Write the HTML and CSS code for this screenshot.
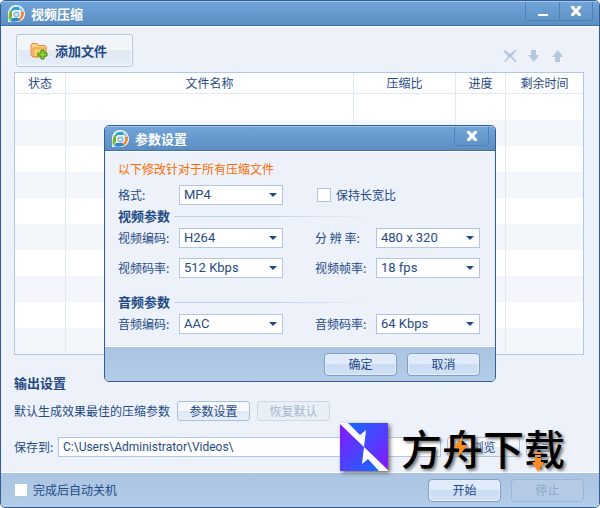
FILE: index.html
```
<!DOCTYPE html>
<html lang="zh-CN">
<head>
    <meta charset="utf-8">
    <title>视频压缩</title>
    <link rel="stylesheet" href="styles.css">
</head>
<body>

<svg class="defs" width="0" height="0" aria-hidden="true">
    <symbol id="logo" viewBox="0 0 18 18">
        <path d="M9 0C4 0 1 4 1 9v8h8c5 0 9-3 9-8s-4-9-9-9z" fill="#f3f6f6"/>
        <path d="M4 5C5 2 8 1 12 2l1 3-6 0-3 2z" fill="#27a5cf"/>
        <path d="M12 2c3 1 5 4 5 6h-3l-1-4z" fill="#9cc8e4"/>
        <path d="M14 7h3c0 4-1 7-5 9l-1-2 3-3z" fill="#f08532"/>
        <path d="M3 16l2-3h6l2 2c-3 2-7 2-10 1z" fill="#2c87c8"/>
        <path d="M3 5c-1 3-2 7-1 11l3-4V7z" fill="#75b52b"/>
        <path d="M6 6h7v7H6z" fill="#e8f1fa"/>
        <circle cx="9.500" cy="9.500" r="3" fill="#8fb9df"/>
        <circle cx="9.500" cy="9.500" r="1.500" fill="#dcebf8"/>
    </symbol>
    <symbol id="close" viewBox="0 0 10 10">
        <path d="M0 0h3l2 3 2-3h3v2L7 5l3 3v2H7L5 7l-2 3H0V8l3-3-3-3z" fill="#fff"/>
    </symbol>
</svg>

<div class="window">
    <header class="titlebar">
        <svg class="logo"><use href="#logo"/></svg>
        <h1>视频压缩</h1>
        <div class="caption">
            <button type="button" aria-label="最小化"><svg viewBox="0 0 10 10"><path d="M0 8h10v2H0z" fill="#fff"/></svg></button>
            <button type="button" aria-label="关闭"><svg><use href="#close"/></svg></button>
        </div>
    </header>

    <main class="content">
        <div class="toolbar">
            <button type="button" class="add">
                <svg viewBox="0 0 18 18">
                    <path d="M1 3l1-1.500h5l1.500 2H15l1 1V14l-1 1H3l-2-2z" fill="#fbd384" stroke="#e0863a"/>
                    <path d="M3 6h13l-1 8.500H3z" fill="#fcc868" stroke="#ea9a45"/>
                    <path d="M11 8h3v3h3v3h-3v3h-3v-3H8v-3h3z" fill="#8fd33b" stroke="#3d8a12"/>
                </svg>
                添加文件
            </button>
            <div class="tools">
                <button type="button" aria-label="删除"><svg viewBox="0 0 14 12"><path d="M0 1l2-1 5 4 5-4h2L9 6l5 6-2 0-5-5-5 5H1l4-6z"/></svg></button>
                <button type="button" aria-label="下移"><svg viewBox="0 0 14 12"><path d="M4 0h5v5h3L7 12 1 5h3z"/></svg></button>
                <button type="button" aria-label="上移"><svg viewBox="0 0 14 12"><path d="M4 12h5V7h3L7 0 1 7h3z"/></svg></button>
            </div>
        </div>

        <table class="files">
            <colgroup><col class="c-state"><col><col class="c-ratio"><col class="c-progress"><col class="c-time"></colgroup>
            <thead>
                <tr><th>状态</th><th>文件名称</th><th>压缩比</th><th>进度</th><th>剩余时间</th></tr>
            </thead>
            <tbody>
                <tr><td></td><td></td><td></td><td></td><td></td></tr>
                <tr><td></td><td></td><td></td><td></td><td></td></tr>
                <tr><td></td><td></td><td></td><td></td><td></td></tr>
                <tr><td></td><td></td><td></td><td></td><td></td></tr>
                <tr><td></td><td></td><td></td><td></td><td></td></tr>
                <tr><td></td><td></td><td></td><td></td><td></td></tr>
                <tr><td></td><td></td><td></td><td></td><td></td></tr>
                <tr><td></td><td></td><td></td><td></td><td></td></tr>
                <tr><td></td><td></td><td></td><td></td><td></td></tr>
                <tr><td></td><td></td><td></td><td></td><td></td></tr>
            </tbody>
        </table>

        <section class="output">
            <h2>输出设置</h2>
            <div class="line">
                <span>默认生成效果最佳的压缩参数</span>
                <button type="button" class="btn">参数设置</button>
                <button type="button" class="btn" disabled>恢复默认</button>
            </div>
            <div class="line save">
                <label for="path">保存到:</label>
                <input type="text" id="path" value="C:\Users\Administrator\Videos\">
                <button type="button" class="btn">浏览</button>
                <button type="button" class="btn open" aria-label="打开文件夹"><svg viewBox="0 0 14 12"><path d="M1.500 10.500v-9h4l1 2h6v7zM3.500 6.500h7"/></svg></button>
            </div>
        </section>
    </main>

    <footer class="actions">
        <label class="check"><input type="checkbox">完成后自动关机</label>
        <button type="button" class="big">开始</button>
        <button type="button" class="big" disabled>停止</button>
    </footer>
</div>

<div class="dialog" role="dialog" aria-labelledby="dialog-title">
    <div class="titlebar">
        <svg class="logo"><use href="#logo"/></svg>
        <h1 id="dialog-title">参数设置</h1>
        <div class="caption">
            <button type="button" aria-label="关闭"><svg><use href="#close"/></svg></button>
        </div>
    </div>
    <form class="params">
        <p class="note">以下修改针对于所有压缩文件</p>
        <div class="row first">
            <div class="field"><label for="format">格式:</label><span class="select"><select id="format"><option>MP4</option></select></span></div>
            <label class="check"><input type="checkbox">保持长宽比</label>
        </div>
        <h2>视频参数</h2>
        <div class="row">
            <div class="field"><label for="vcodec">视频编码:</label><span class="select"><select id="vcodec"><option>H264</option></select></span></div>
            <div class="field"><label for="size">分 辨 率:</label><span class="select"><select id="size"><option>480 x 320</option></select></span></div>
        </div>
        <div class="row">
            <div class="field"><label for="vrate">视频码率:</label><span class="select"><select id="vrate"><option>512 Kbps</option></select></span></div>
            <div class="field"><label for="fps">视频帧率:</label><span class="select"><select id="fps"><option>18 fps</option></select></span></div>
        </div>
        <h2 class="audio">音频参数</h2>
        <div class="row">
            <div class="field"><label for="acodec">音频编码:</label><span class="select"><select id="acodec"><option>AAC</option></select></span></div>
            <div class="field"><label for="arate">音频码率:</label><span class="select"><select id="arate"><option>64 Kbps</option></select></span></div>
        </div>
    </form>
    <div class="actions">
        <button type="button" class="big">确定</button>
        <button type="button" class="big">取消</button>
    </div>
</div>

<div class="brand">
    <svg class="mark" viewBox="0 0 48 48">
        <defs>
            <linearGradient id="right" x1="0" y1="0" x2="1" y2="1"><stop offset="0" stop-color="#0b72ff"/><stop offset="1" stop-color="#8a14ff"/></linearGradient>
            <linearGradient id="left" x1="0" y1="0" x2="1" y2="1"><stop offset="0" stop-color="#8a14ff"/><stop offset="1" stop-color="#0b72ff"/></linearGradient>
        </defs>
        <path d="M0 0h48v48z" fill="url(#right)"/>
        <path d="M0 0v48h48z" fill="url(#left)"/>
        <path d="M0 0h8l12 12 6-5-2 17L0 1z" fill="#fff"/>
        <path d="M24 24l24 23v1h-9L28 36l-6 5z" fill="#fff"/>
    </svg>
    <span class="name">方舟下载</span>
    <svg class="bolt" viewBox="0 0 14 22"><path d="M9 0L0 12h6l-2 10L14 9H8z" fill="#ff8c1e"/></svg>
    <svg class="down" viewBox="0 0 12 20"><path d="M3 0h6v2H3zM3 3h6v2H3zM3 6h6v4h3L6 20 0 10h3z" fill="#ff8c1e"/></svg>
</div>

</body>
</html>
```

FILE: styles.css
```
* {
    box-sizing: border-box;
}
body {
    margin: 0;
    background: #fff;
    color: #1f4a85;
    font: 12px/18px "Noto Sans CJK SC", sans-serif;
}
button, input, select {
    margin: 0;
    color: inherit;
    font: inherit;
}
button {
    padding: 0;
}
h1, h2, p {
    margin: 0;
}
h1, h2 {
    font-size: 13px;
    font-weight: bold;
}
.defs {
    position: absolute;
}

/* window frame */
.window, .dialog {
    display: flex;
    flex-direction: column;
    background: #edf2fa;
    border: 1px solid #335c94;
    border-radius: 5px;
    overflow: hidden;
}
.window {
    min-height: 100vh;
}
.titlebar {
    display: flex;
    align-items: center;
    gap: 6px;
    height: 25px;
    padding: 0 6px;
    color: #fff;
    background: linear-gradient(#71a4d8, #5c8ec2);
    border-top: 1px solid #a0c4ea;
    border-bottom: 1px solid #3d73b0;
}
.logo {
    width: 18px;
    height: 18px;
}
.caption {
    display: flex;
    align-self: flex-start;
    height: 19px;
    margin-left: auto;
    border: 1px solid #5180b8;
    border-top: 0;
    border-radius: 0 0 4px 4px;
}
.caption button {
    display: grid;
    place-items: center;
    width: 33px;
    background: none;
    border: 0;
}
.caption button + button {
    border-left: 1px solid #5180b8;
}
.caption svg {
    width: 10px;
    height: 10px;
}

/* main window */
.content {
    flex: 1;
    padding: 7px 15px 0 13px;
    border-top: 1px solid #fff;
}
.toolbar {
    display: flex;
    align-items: flex-end;
    justify-content: space-between;
    padding: 0 19px 5px 2px;
}
.add {
    display: flex;
    align-items: center;
    gap: 7px;
    width: 117px;
    height: 33px;
    padding: 0 13px;
    font-size: 13px;
    font-weight: bold;
    background: linear-gradient(#f1f4f9 48%, #dfe8f3 50%, #e6eef8);
    border: 1px solid #b3c6df;
    border-radius: 3px;
    box-shadow: inset 0 0 0 1px #f8fafd;
}
.add svg {
    width: 18px;
    height: 18px;
}
.tools {
    display: flex;
    gap: 10px;
    padding-bottom: 5px;
}
.tools button {
    display: block;
    width: 14px;
    height: 12px;
    background: none;
    border: 0;
}
.tools svg {
    display: block;
    fill: #b4c8de;
}

.files {
    width: 100%;
    table-layout: fixed;
    border: 1px solid #aec9e5;
    border-spacing: 0;
    background: #fff;
}
.c-state { width: 51px; }
.c-ratio { width: 102px; }
.c-progress { width: 50px; }
.c-time { width: 77px; }
.files th, .files td {
    padding: 0;
    border-right: 1px solid #e1eaf4;
}
.files th:last-child, .files td:last-child {
    border-right: 0;
}
.files th {
    height: 21px;
    font-weight: normal;
    border-bottom: 1px solid #e1eaf4;
}
.files td {
    height: 26px;
}
.files tbody tr:nth-child(even) {
    background: #f3f7fb;
}

.output h2 {
    padding: 19px 0 9px;
}
.line {
    display: flex;
    align-items: center;
    gap: 7px;
    margin-bottom: 16px;
}
.save {
    gap: 6px;
    margin: 0 24px 15px 0;
}
.save label {
    width: 38px;
    white-space: nowrap;
}
#path, select {
    height: 20px;
    padding: 0 4px;
    font: 13px/18px Roboto, sans-serif;
    background: #fff;
    border: 1px solid #afc7e4;
    border-radius: 0;
    outline: 0;
}
#path {
    flex: 1;
    min-width: 0;
    font-size: 12px;
}
.btn {
    width: 73px;
    height: 20px;
    background: linear-gradient(#f6f8fb 48%, #dfe9f5 50%, #e6eef8);
    border: 1px solid #aabfda;
    border-radius: 3px;
}
.btn:disabled {
    color: #a5b7cf;
    background: #e9eff7;
    border-color: #ced9e8;
}
.btn.open {
    display: grid;
    place-items: center;
    width: 34px;
}
.open svg {
    width: 14px;
    height: 12px;
    fill: none;
    stroke: #5f80ad;
}

.actions {
    display: flex;
    align-items: center;
    justify-content: flex-end;
    gap: 10px;
    height: 35px;
    padding: 0 15px 0 13px;
    background: linear-gradient(#aac4e1, #b3cce8);
    border-top: 1px solid #fff;
}
.big {
    width: 73px;
    height: 23px;
    background: linear-gradient(#dfeafb 48%, #cbdcf3 50%, #d1e0f5);
    border: 1px solid #7f9fc8;
    border-radius: 4px;
    box-shadow: inset 0 0 0 1px #e4eefc;
}
.big:disabled {
    color: #8ba7ca;
    background: #b5cbe5;
    border-color: #9bb6d6;
    box-shadow: none;
}
.check {
    display: flex;
    align-items: center;
    gap: 5px;
}
.check input {
    appearance: none;
    width: 14px;
    height: 14px;
    background: #fff;
    border: 1px solid #afc7e4;
}
.window .check {
    margin-right: auto;
}
.row .check {
    padding-left: 2px;
}

/* settings dialog */
.dialog {
    position: absolute;
    top: 125px;
    left: 50%;
    width: 392px;
    margin-left: -196px;
}
.params {
    padding: 8px 15px 12px 13px;
    border-top: 1px solid #fff;
}
.note {
    padding-bottom: 7px;
    color: #ff6a00;
}
.row {
    display: grid;
    grid-template-columns: 165px 1fr;
    column-gap: 32px;
    margin-bottom: 10px;
}
.row.first {
    margin-bottom: 2px;
}
.row:last-child {
    margin-bottom: 0;
}
.field {
    display: grid;
    grid-template-columns: 61px 104px;
    align-items: center;
}
.params h2 {
    display: flex;
    align-items: center;
    gap: 4px;
    margin-bottom: 3px;
}
.params h2::after {
    content: "";
    width: 200px;
    height: 1px;
    background: linear-gradient(90deg, #bfd3ee 50%, #edf2fa);
}
.params h2.audio {
    margin-top: 15px;
}
.select {
    display: grid;
    align-items: center;
}
.select select, .select::after {
    grid-area: 1 / 1;
}
.select select {
    appearance: none;
    width: 104px;
}
.select::after {
    content: "";
    justify-self: end;
    margin-right: 6px;
    border: 4px solid transparent;
    border-top-color: #1f4a85;
    border-bottom: 0;
    pointer-events: none;
}

/* brand overlay */
.brand {
    position: absolute;
    right: 35px;
    bottom: 34px;
    display: flex;
    align-items: center;
    gap: 13px;
    pointer-events: none;
}
.mark {
    width: 48px;
    height: 48px;
    filter: drop-shadow(2px 2px 2px #666);
}
.name {
    color: #000;
    font-size: 41px;
    font-weight: 500;
    line-height: 54px;
    text-shadow: 2px 2px 3px #777;
}
.bolt, .down {
    position: absolute;
}
.bolt {
    right: 97px;
    bottom: 16px;
    width: 15px;
    height: 22px;
}
.down {
    right: 21px;
    bottom: 2px;
    width: 12px;
    height: 20px;
}
```
